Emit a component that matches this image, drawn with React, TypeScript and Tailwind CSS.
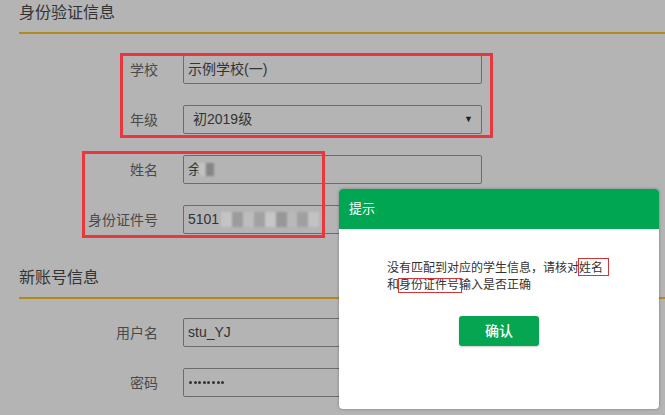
import React from "react";

const font = "font-['Liberation_Sans','Noto_Sans_CJK_SC',sans-serif]";

function Field({ label, children }: { label: string; children: React.ReactNode }) {
  return (
    <div className="flex items-center">
      <div className="w-[158px] text-right text-[14px] leading-[20px] text-[#4a4a4a]">{label}</div>
      <div className="ml-[25px] flex h-[29px] w-[299px] items-center rounded-[2px] border border-[#6c6c6c] px-[4px] text-[14px] text-[#333]">
        {children}
      </div>
    </div>
  );
}

function SectionTitle({ text }: { text: string }) {
  return (
    <div className="ml-[19px] h-[34px] border-b-2 border-[#b08a1c] pt-[3px] text-[16px] leading-[20px] text-[#333]">
      {text}
    </div>
  );
}

const mosaic = ["#c4c4c4", "#9c9c9c", "#bdbdbd", "#a2a2a2", "#c6c6c6", "#979797", "#b9b9b9", "#a0a0a0", "#c2c2c2"];

export default function App() {
  return (
    <div className={`relative h-[415px] w-full overflow-hidden bg-[#b4b4b4] ${font}`}>
      <SectionTitle text="身份验证信息" />

      <div className="relative flex flex-col gap-[21px] pt-[21px]">
        <Field label="学校">示例学校(一)</Field>
        <Field label="年级">
          <span className="pl-[5px]">初2019级</span>
          <span className="ml-auto mr-[4px] text-[9px] leading-none text-[#222]">▼</span>
        </Field>
        <Field label="姓名">
          <span>余</span>
          <span className="-ml-[4px] inline-flex h-[13px] gap-[1px] blur-[1px]">
            <span className="h-full w-[7px] bg-[#c2c2c2]" />
            <span className="h-full w-[8px] bg-[#858585]" />
          </span>
        </Field>
        <Field label="身份证件号">
          <span>5101</span>
          <span className="ml-[2px] inline-flex h-[15px] w-[98px] blur-[1px]">
            {mosaic.map((c, i) => (
              <span key={i} className="flex-1" style={{ backgroundColor: c }} />
            ))}
          </span>
        </Field>

        <div className="pointer-events-none absolute left-[120px] top-[19px] h-[85px] w-[373px] border-[3px] border-[#e8383d]" />
        <div className="pointer-events-none absolute left-[82px] top-[117px] h-[87px] w-[243px] border-[3px] border-[#e8383d]" />
      </div>

      <div className="mt-[31px]">
        <SectionTitle text="新账号信息" />
      </div>

      <div className="flex flex-col gap-[21px] pt-[19px]">
        <Field label="用户名">stu_YJ</Field>
        <Field label="密码">
          <span className="flex gap-[1.6px] pl-[1px]">
            {Array.from({ length: 8 }).map((_, i) => (
              <span key={i} className="h-[3px] w-[3px] rounded-full bg-[#333]" />
            ))}
          </span>
        </Field>
      </div>

      <div className="absolute left-[339px] top-[189px] h-[220px] w-[320px] overflow-hidden rounded-[4px] bg-white shadow-[0_0_3px_rgba(0,0,0,0.35)]">
        <div className="flex h-[40px] items-center bg-[#00a651] pl-[10px] text-[13px] text-white">提示</div>
        <div className="pl-[48px] pt-[31px] text-[12px] leading-[17px] text-[#333]">
          <p>
            没有匹配到对应的学生信息，请核对
            <span className="relative">
              姓名
              <span className="absolute -left-[1px] -right-[6px] -top-[3px] -bottom-[1px] border border-[#d0353a]" />
            </span>
          </p>
          <p>
            和
            <span className="relative">
              身份证件号
              <span className="absolute -left-[1px] right-[-3px] top-0 -bottom-[1px] border border-[#d0353a]" />
            </span>
            输入是否正确
          </p>
        </div>
        <div className="mt-[22px] flex justify-center">
          <button className="h-[30px] w-[80px] rounded-[3px] bg-[#05a552] text-[14px] font-medium text-white shadow-[0_1px_2px_rgba(0,0,0,0.2)]">
            确认
          </button>
        </div>
      </div>
    </div>
  );
}
